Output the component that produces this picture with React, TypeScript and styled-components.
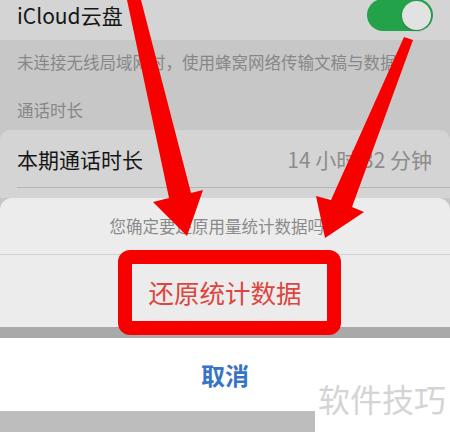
import React from 'react';
import styled, { createGlobalStyle } from 'styled-components';

const GlobalStyle = createGlobalStyle`
    html, body {
        margin: 0;
        padding: 0;
        background: #ffffff;
    }
    body {
        font-family: "Noto Sans CJK SC", "Noto Sans", sans-serif;
    }
`;

const App = () => {
    return (
        <Screen>
            <GlobalStyle />
            <ToggleRow>
                <RowTitle>iCloud云盘</RowTitle>
                <Toggle>
                    <Knob />
                </Toggle>
            </ToggleRow>
            <FooterNote>未连接无线局域网时，使用蜂窝网络传输文稿与数据。</FooterNote>
            <SectionHeader>通话时长</SectionHeader>
            <Card>
                <CardRow>
                    <RowTitle>本期通话时长</RowTitle>
                    <RowValue>14 小时 32 分钟</RowValue>
                </CardRow>
                <Separator />
            </Card>

            <Sheet>
                <SheetMessage>您确定要还原用量统计数据吗？</SheetMessage>
                <SheetDivider />
                <SheetButton $destructive>还原统计数据</SheetButton>
            </Sheet>
            <SheetGap />
            <CancelButton>取消</CancelButton>
            <BottomStrip />

            <Arrows viewBox="0 0 450 432">
                <polygon points="127,0 141,0 191,193 203,190 187,236 153,202 169,198" />
                <polygon points="404,37 413,40 352,207 364,212 325,238 316,196 331,200" />
            </Arrows>
            <Highlight />
            <Watermark>软件技巧</Watermark>
        </Screen>
    );
};

export default App;

// Styled Components
const Screen = styled.div`
    position: relative;
    width: 450px;
    height: 432px;
    overflow: hidden;
    display: flex;
    flex-direction: column;
    background-color: #c7c7c7;
`;

const ToggleRow = styled.div`
    height: 40px;
    box-sizing: border-box;
    padding: 0 17px 10px 17px;
    display: flex;
    align-items: center;
    justify-content: space-between;
    background-color: #d4d4d4;
`;

const RowTitle = styled.span`
    font-size: 21px;
    color: #161616;
    line-height: 28px;
`;

const RowValue = styled.span`
    font-size: 21px;
    color: #8c8c8c;
    line-height: 28px;
`;

const Toggle = styled.div`
    width: 66px;
    height: 32px;
    border-radius: 16px;
    background-color: #23a249;
    display: flex;
    align-items: center;
    justify-content: flex-end;
    padding: 0 2px;
    box-sizing: border-box;
`;

const Knob = styled.div`
    width: 29px;
    height: 29px;
    border-radius: 50%;
    background-color: #e2e2e2;
    box-shadow: 0 1px 2px rgba(0, 0, 0, 0.2);
`;

const FooterNote = styled.div`
    padding: 11px 17px 0 17px;
    font-size: 16.5px;
    line-height: 22px;
    color: #878787;
    white-space: nowrap;
`;

const SectionHeader = styled.div`
    padding: 26px 17px 0 17px;
    font-size: 16.5px;
    line-height: 22px;
    color: #878787;
`;

const Card = styled.div`
    margin-top: 9px;
    height: 68px;
    border-radius: 10px 10px 0 0;
    background-color: #d4d4d4;
`;

const CardRow = styled.div`
    height: 57px;
    padding: 0 18px 0 17px;
    display: flex;
    align-items: center;
    justify-content: space-between;
`;

const Separator = styled.div`
    height: 1px;
    margin-left: 17px;
    background-color: #b6b6b6;
`;

const Sheet = styled.div`
    display: flex;
    flex-direction: column;
    border-radius: 12px 12px 0 0;
    background-color: #ececec;
`;

const SheetMessage = styled.div`
    height: 56px;
    display: flex;
    align-items: center;
    justify-content: center;
    font-size: 16.5px;
    color: #8a8a8a;
`;

const SheetDivider = styled.div`
    height: 1px;
    background-color: #d0d0d0;
`;

const SheetButton = styled.div<{ $destructive?: boolean }>`
    height: 72px;
    display: flex;
    align-items: center;
    justify-content: center;
    font-size: 25.5px;
    color: ${(p) => (p.$destructive ? '#dc4540' : '#3a78c9')};
`;

const SheetGap = styled.div`
    height: 11px;
    background-color: #a9a9a9;
`;

const CancelButton = styled.div`
    height: 73px;
    display: flex;
    align-items: center;
    justify-content: center;
    background-color: #ffffff;
    font-size: 24px;
    font-weight: 700;
    color: #3874c6;
`;

const BottomStrip = styled.div`
    flex: 1;
    background-color: #bdbdbd;
`;

const Arrows = styled.svg`
    position: absolute;
    left: 0;
    top: 0;
    width: 450px;
    height: 432px;
    pointer-events: none;
    fill: #f70000;
`;

const Highlight = styled.div`
    position: absolute;
    left: 118px;
    top: 250px;
    width: 223px;
    height: 85px;
    box-sizing: border-box;
    border: 14px solid #f70000;
    border-radius: 12px;
`;

const Watermark = styled.div`
    position: absolute;
    right: 0;
    bottom: 0;
    width: 135px;
    height: 52px;
    box-sizing: border-box;
    padding: 0 0 4px 3px;
    background-color: #ffffff;
    font-size: 32px;
    line-height: 36px;
    color: #d4d4d4;
    display: flex;
    align-items: flex-start;
    letter-spacing: 0px;
`;
